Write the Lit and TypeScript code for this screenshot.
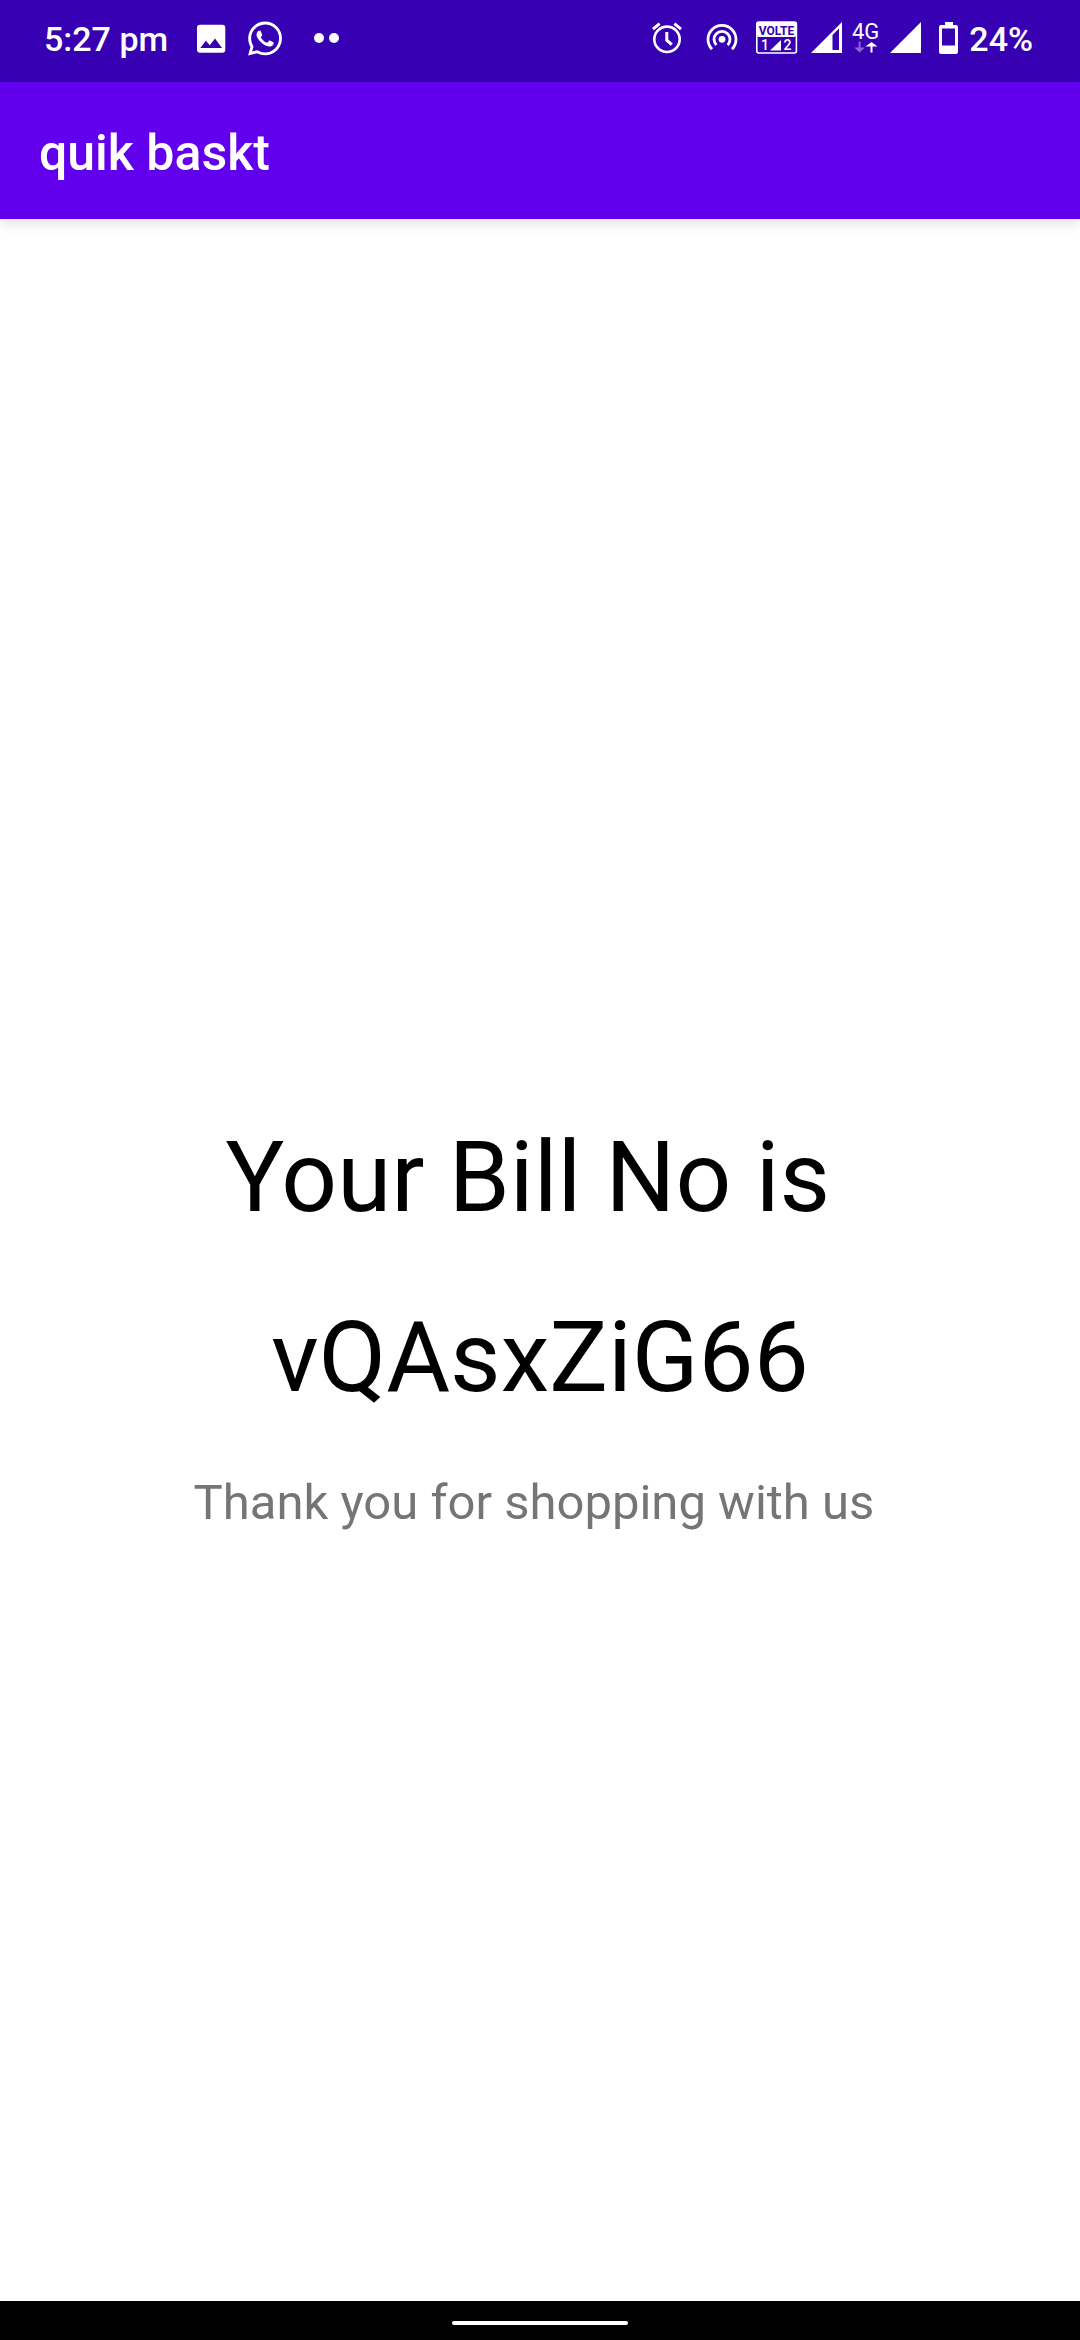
import { LitElement, html, css } from "lit";
import { customElement, property } from "lit/decorators.js";

@customElement("status-bar")
class StatusBar extends LitElement {
  static styles = css`
    :host {
      display: block;
      background: #3700b3;
      color: #fff;
    }
    .bar {
      box-sizing: border-box;
      height: 82px;
      padding: 0 47px 6px 44px;
      display: flex;
      align-items: center;
      justify-content: space-between;
      font: 500 34px/40px Roboto, sans-serif;
    }
    .group {
      display: flex;
      align-items: center;
    }
    .left {
      gap: 18px;
    }
    .right {
      gap: 10px;
    }
    .time,
    .level {
      padding-top: 2px;
    }
    .time {
      padding-right: 7px;
    }
    svg {
      display: block;
      height: 40px;
      fill: currentColor;
    }
    .line {
      fill: none;
      stroke: currentColor;
    }
    .hole {
      fill: #3700b3;
    }
    .dim {
      opacity: 0.4;
    }
    .volte {
      font: 700 12px Roboto, sans-serif;
    }
    .sim {
      font: 500 14px Roboto, sans-serif;
    }
    .network {
      font: 400 22px Roboto, sans-serif;
    }
  `;

  @property() time = "";
  @property() battery = "";

  render() {
    return html`
      <div class="bar">
        <div class="group left">
          <span class="time">${this.time}</span>
          <svg width="36" viewBox="0 0 36 40" role="img" aria-label="Picture notification">
            <rect x="4" y="6.7" width="28.3" height="28" rx="3" />
            <path class="hole" d="M7.3 30 12.8 22.800 16.8 27.200 22 20.600 29 30z" />
          </svg>
          <svg width="36" viewBox="0 0 36 40" role="img" aria-label="WhatsApp">
            <path
              transform="translate(1 3.6) scale(1.417)"
              d="M17.472 14.382c-.297-.149-1.758-.867-2.03-.967-.273-.099-.471-.148-.67.15-.197.297-.767.966-.94 1.164-.173.199-.347.223-.644.075-.297-.15-1.255-.463-2.39-1.475-.883-.788-1.48-1.761-1.653-2.059-.173-.297-.018-.458.13-.606.134-.133.298-.347.446-.52.149-.174.198-.298.298-.497.099-.198.05-.371-.025-.52-.075-.149-.669-1.612-.916-2.207-.242-.579-.487-.5-.669-.51-.173-.008-.371-.01-.57-.01-.198 0-.52.074-.792.372-.272.297-1.04 1.016-1.04 2.479 0 1.462 1.065 2.875 1.213 3.074.149.198 2.096 3.2 5.077 4.487.709.306 1.262.489 1.694.625.712.227 1.36.195 1.871.118.571-.085 1.758-.719 2.006-1.413.248-.694.248-1.289.173-1.413-.074-.124-.272-.198-.57-.347m-5.421 7.403h-.004a9.87 9.87 0 01-5.031-1.378l-.361-.214-3.741.982.998-3.648-.235-.374a9.86 9.86 0 01-1.51-5.26c.001-5.45 4.436-9.884 9.888-9.884 2.64 0 5.122 1.03 6.988 2.898a9.825 9.825 0 012.893 6.994c-.003 5.45-4.437 9.884-9.885 9.884m8.413-18.297A11.815 11.815 0 0012.05 0C5.495 0 .16 5.335.157 11.892c0 2.096.547 4.142 1.588 5.945L.057 24l6.305-1.654a11.882 11.882 0 005.683 1.448h.005c6.554 0 11.89-5.335 11.893-11.893a11.821 11.821 0 00-3.48-8.413z"
            />
          </svg>
          <svg width="44" viewBox="0 0 44 40" role="img" aria-label="More notifications">
            <circle cx="18" cy="20" r="5" />
            <circle cx="33" cy="20" r="5" />
          </svg>
        </div>
        <div class="group right">
          <svg width="44" viewBox="0 0 44 40" role="img" aria-label="Alarm">
            <circle class="line" cx="19" cy="21.3" r="12.7" stroke-width="2.6" />
            <path class="line" stroke-width="3" d="M5 11.2 11.6 5.6M33 11.2 26.4 5.6" />
            <path class="line" stroke-width="3" d="M18.8 14v8.2l5 4.4" />
          </svg>
          <svg width="44" viewBox="0 0 44 40" role="img" aria-label="Hotspot">
            <circle cx="20" cy="21.3" r="3.4" />
            <path class="line" stroke-width="2.8" d="M10 31.2a14 14 0 1 1 20 0" />
            <path class="line" stroke-width="2.8" d="M14.4 27a8 8 0 1 1 11.2 0" />
          </svg>
          <svg width="44" viewBox="0 0 44 40" role="img" aria-label="VoLTE on SIM 1 and 2">
            <rect class="line" x="0.8" y="4" width="39.6" height="31" rx="2" stroke-width="1.6" />
            <rect x="1" y="4" width="39" height="15" rx="2" />
            <text class="volte hole" x="20.5" y="16.5" text-anchor="middle">VOLTE</text>
            <text class="sim" x="5" y="32">1</text>
            <path d="M14 32.5 25 22v10.5z" />
            <text class="sim" x="27.5" y="32">2</text>
          </svg>
          <svg width="32" viewBox="0 0 32 40" role="img" aria-label="SIM 1 signal">
            <path d="M1 35 32 4v31z" />
            <path class="hole" d="M22.5 17 29 10.5V32h-6.5z" />
          </svg>
          <svg width="28" viewBox="0 0 28 40" role="img" aria-label="4G data">
            <text class="network" x="0" y="21">4G</text>
            <path class="dim" d="M6.6 23.5h2v6h4.4L7.6 34.5 2.2 29.5h4.4z" />
            <path d="M18.5 34.5v-6h-5L19.5 24l6 4.500h-5v6z" />
          </svg>
          <svg width="39" viewBox="0 0 39 40" role="img" aria-label="SIM 2 signal">
            <path d="M0 35 31 4v31z" />
          </svg>
          <svg width="20" viewBox="0 0 20 40" role="img" aria-label="Battery">
            <path d="M6 4h8v3h3q2 0 2 2v25q0 2-2 2H2q-2 0-2-2V9q0-2 2-2h4z" />
            <path class="hole" d="M3 10.5h13v17H3z" />
          </svg>
          <span class="level">${this.battery}</span>
        </div>
      </div>
    `;
  }
}

@customElement("app-root")
class AppRoot extends LitElement {
  static styles = css`
    :host {
      display: flex;
      flex-direction: column;
      min-height: 100vh;
      background: #fff;
      font-family: Roboto, sans-serif;
    }
    .app-bar {
      box-sizing: border-box;
      display: flex;
      align-items: center;
      height: 137px;
      padding: 4px 39px 0;
      background: #6200ee;
      color: #fff;
      box-shadow: 0 4px 12px rgba(0, 0, 0, 0.13);
    }
    .title {
      margin: 0;
      font-size: 50px;
      font-weight: 500;
      line-height: 58px;
    }
    .content {
      flex: 1;
      display: flex;
      flex-direction: column;
      align-items: center;
      justify-content: center;
      padding-top: 132px;
      white-space: pre;
      text-align: center;
    }
    .label,
    .number {
      margin: 0 0 64px;
      font-size: 98px;
      font-weight: 400;
      line-height: 116px;
      color: #000;
    }
    .number {
      margin-bottom: 58px;
    }
    .thanks {
      margin: 0;
      font-size: 49px;
      line-height: 58px;
      color: #757575;
    }
    .nav {
      display: flex;
      justify-content: center;
      padding: 20px 0 15px;
      background: #000;
    }
    .handle {
      width: 176px;
      height: 4px;
      border-radius: 2px;
      background: #fff;
    }
  `;

  render() {
    return html`
      <status-bar time="5:27 pm" battery="24%"></status-bar>
      <header class="app-bar"><h1 class="title">quik baskt</h1></header>
      <main class="content"><h2 class="label">${"Your Bill No is "}</h2><p class="number">vQAsxZiG66</p><p class="thanks">${"Thank you for shopping with us "}</p></main>
      <footer class="nav"><div class="handle"></div></footer>
    `;
  }
}
